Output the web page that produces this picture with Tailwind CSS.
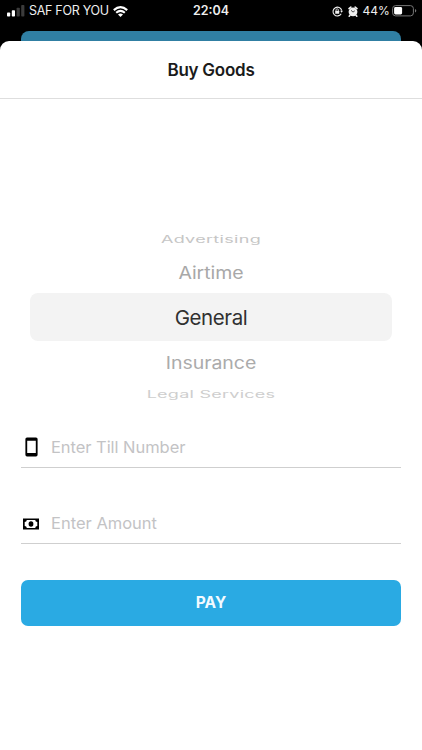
<!DOCTYPE html>
<html lang="en">
<head>
<meta charset="utf-8">
<meta name="viewport" content="width=device-width, initial-scale=1">
<title>Buy Goods</title>
<script src="https://cdn.jsdelivr.net/npm/@tailwindcss/browser@4"></script>
</head>
<body class="bg-black font-['Inter',sans-serif] overflow-hidden">
<div class="flex h-[750px] w-[422px] flex-col bg-black">
  <header class="grid h-[31px] shrink-0 grid-cols-[180px_62px_1fr] text-[12.5px] leading-[22px] text-[#eeeeee]">
    <div class="flex h-[22px] items-center pl-[7px]">
      <svg class="mr-[4px] h-[12px] w-[18px] shrink-0" viewBox="0 0 18 12">
        <rect x="0" y="7.5" width="3.2" height="4" rx=".8" fill="#fff"/>
        <rect x="4.8" y="5.3" width="3.2" height="6.2" rx=".8" fill="#fff"/>
        <rect x="9.6" y="2.7" width="3.2" height="8.8" rx=".8" fill="#3b3b3b"/>
        <rect x="14.2" y="0" width="3.2" height="11.5" rx=".8" fill="#3b3b3b"/>
      </svg>
      <span class="w-[80px] whitespace-nowrap tracking-[-0.3px]">SAF FOR YOU</span>
      <svg class="ml-[4px] h-[11px] w-[15px] shrink-0" viewBox="0 0 15 11" fill="none" stroke="#fff" stroke-width="2.1">
        <path d="M.8 4.1Q7.5 -1.8 14.2 4.1"/>
        <path d="M3.2 6.7Q7.5 3 11.8 6.7"/>
        <path d="M5 8.5Q7.5 6.4 10 8.5L7.5 11Z" fill="#fff" stroke="none"/>
      </svg>
    </div>
    <div class="h-[22px] text-center text-[12.5px] font-semibold tracking-[0px]">22:04</div>
    <div class="flex h-[22px] items-center pl-[90px]">
      <svg class="h-[11px] w-[11px] shrink-0" viewBox="0 0 11 11" fill="none" stroke="#eee" stroke-width="1.1">
        <path d="M9.2 7.8A4.4 4.4 0 1 1 9.7 4.5"/>
        <path d="M8.1 4.8h2.9L9.6 6.8Z" fill="#eee" stroke="none"/>
        <rect x="3.2" y="4.8" width="4" height="3" rx=".4" fill="#eee" stroke="none"/>
        <path d="M4 5V4a1.2 1.2 0 0 1 2.4 0v1" stroke-width=".8"/>
      </svg>
      <svg class="ml-[5px] h-[11px] w-[10px] shrink-0" viewBox="0 0 10 11">
        <circle cx="5" cy="5.8" r="4.4" fill="#eee"/>
        <path d="M1 2.6 2.8 1.1M7.2 1.1 9 2.6M2 9.3 1.2 10.2M8 9.3l.8.9" stroke="#eee" stroke-width="1.6" stroke-linecap="round"/>
        <path d="M3 4.3 5 6.1 6.8 4.8" fill="none" stroke="#222" stroke-width=".8"/>
      </svg>
      <span class="ml-[4.5px] w-[27px] whitespace-nowrap text-[12px] tracking-[0px]">44%</span>
      <svg class="ml-[2px] h-[12px] w-[25px] shrink-0" viewBox="0 0 25 12">
        <rect x=".6" y=".6" width="20.8" height="10.3" rx="3" fill="none" stroke="#777"/>
        <rect x="2.1" y="2.1" width="8" height="7.3" rx="1.4" fill="#fff"/>
        <path d="M23 4.1q1.3.5 1.3 1.7T23 7.5Z" fill="#777"/>
      </svg>
    </div>
  </header>
  <div class="mx-[21px] h-[10px] shrink-0 rounded-t-[8px] bg-[#307fa3]"></div>
  <main class="flex min-h-0 flex-1 flex-col rounded-t-[9px] bg-white">
    <h1 class="flex h-[58px] shrink-0 items-center justify-center border-b border-[#dedede] pt-[3px] text-[17px] font-semibold tracking-[-0.25px] text-[#1b1b1b]"><span>Buy Goods</span></h1>
    <ul class="flex h-[328px] shrink-0 flex-col items-center px-[30px] pt-[128px]">
      <li class="flex h-[25px] items-center justify-center"><span class="inline-block scale-y-[0.55] text-[18px] leading-[24px] tracking-[0.32px] text-[#c6c6c6]">Advertising</span></li>
      <li class="flex h-[41px] items-center justify-center"><span class="inline-block scale-y-[0.88] text-[19.5px] leading-[24px] tracking-[-0.05px] text-[#a8a8a8]">Airtime</span></li>
      <li class="flex h-[48px] w-[362px] items-center justify-center rounded-[8px] bg-[#f3f3f3] pt-[2px] text-[20.5px] tracking-[-0.4px] text-[#303030]"><span>General</span></li>
      <li class="flex h-[43px] items-center justify-center pt-px"><span class="inline-block scale-y-[0.88] text-[19.5px] leading-[24px] tracking-[-0.05px] text-[#ababab]">Insurance</span></li>
      <li class="flex h-[22px] items-center justify-center"><span class="inline-block scale-y-[0.55] text-[18px] leading-[24px] tracking-[0.25px] text-[#cecece]">Legal Services</span></li>
    </ul>
    <form class="flex flex-col px-[21px]">
      <label class="flex h-[41px] items-center border-b border-[#cfcfcf]">
        <svg class="ml-[3.5px] h-[20px] w-[13px] shrink-0" viewBox="0 0 13 20"><path fill="#000" fill-rule="evenodd" d="M2 .5h9q1.6 0 1.6 1.6v15.7q0 1.6-1.6 1.6H2Q.4 19.4.4 17.8V2.1Q.4.5 2 .5ZM2.2 3.8V16h8.6V3.8Z"/></svg>
        <span class="ml-[13.5px] text-[16.5px] tracking-[-0.05px] text-[#c3c3c5]">Enter Till Number</span>
      </label>
      <label class="mt-[35px] flex h-[41px] items-center border-b border-[#cfcfcf] pt-px">
        <svg class="ml-[2px] h-[12px] w-[16px] shrink-0" viewBox="0 0 16 12"><path fill="#000" d="M0 .5h16v11H0Z"/><path fill="#fff" d="M3.8 2h8.4q.2 1.8 2.1 2v4q-1.9.2-2.1 2H3.8Q3.6 8.2 1.7 8V4q1.9-.2 2.1-2Z"/><ellipse cx="8" cy="6" rx="2.4" ry="2.8" fill="#000"/></svg>
        <span class="ml-[12px] text-[16.5px] text-[#c3c3c5]">Enter Amount</span>
      </label>
      <button type="button" class="mt-[35.5px] h-[46px] rounded-[7px] bg-[#2aaae3] text-[15.5px] font-bold text-[#f2faff]">PAY</button>
    </form>
  </main>
</div>
</body>
</html>
